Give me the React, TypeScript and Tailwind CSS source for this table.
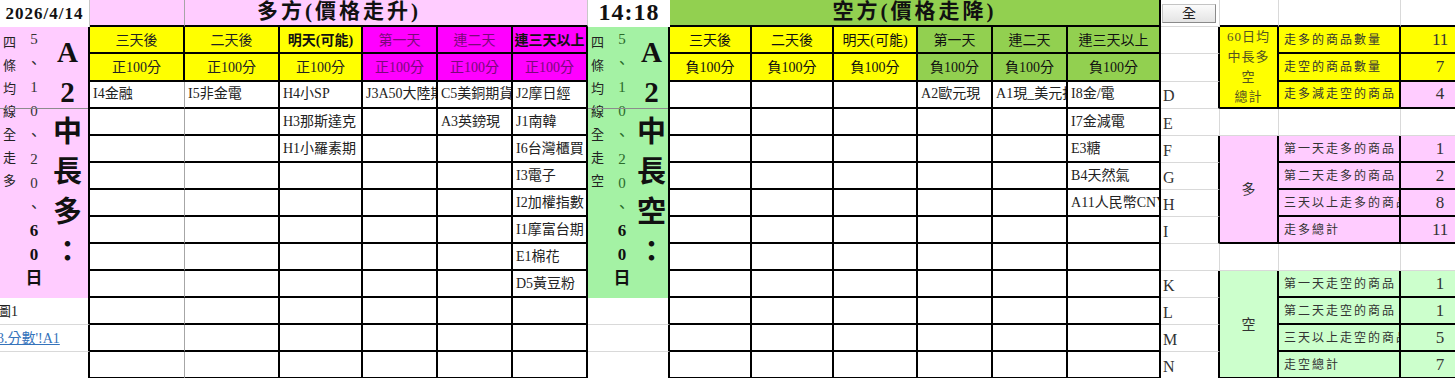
import React from "react";

const serif = "font-['Liberation_Serif','Noto_Sans_CJK_TC',serif]";

const GRID = "border-r border-b border-[#d9d9d9]";
const BLK = "border-r-2 border-b-2 border-black";
const C1DATA = "border-r border-r-[#a6a6a6] border-b-2 border-b-black";

const leftData: string[][] = [
  ["I4金融", "I5非金電", "H4小SP", "J3A50大陸期貨", "C5美銅期貨", "J2摩日經"],
  ["", "", "H3那斯達克", "", "A3英鎊現", "J1南韓"],
  ["", "", "H1小羅素期", "", "", "I6台灣櫃買"],
  ["", "", "", "", "", "I3電子"],
  ["", "", "", "", "", "I2加權指數"],
  ["", "", "", "", "", "I1摩富台期"],
  ["", "", "", "", "", "E1棉花"],
  ["", "", "", "", "", "D5黃豆粉"],
  ["", "", "", "", "", ""],
  ["", "", "", "", "", ""],
  ["", "", "", "", "", ""],
  ["", "", "", "", "", ""],
];

const rightData: string[][] = [
  ["", "", "", "A2歐元現", "A1現_美元指數", "I8金/電"],
  ["", "", "", "", "", "I7金減電"],
  ["", "", "", "", "", "E3糖"],
  ["", "", "", "", "", "B4天然氣"],
  ["", "", "", "", "", "A11人民幣CNY"],
  ["", "", "", "", "", ""],
  ["", "", "", "", "", ""],
  ["", "", "", "", "", ""],
  ["", "", "", "", "", ""],
  ["", "", "", "", "", ""],
  ["", "", "", "", "", ""],
  ["", "", "", "", "", ""],
];

const letters = ["D", "E", "F", "G", "H", "I", "", "K", "L", "M", "N", ""];

function Txt({ t }: { t: string }) {
  return (
    <div className="overflow-hidden whitespace-nowrap px-[3px] text-[14px] leading-[18px] text-[#222]">
      {t}
    </div>
  );
}

function SideBlock({ isLong }: { isLong: boolean }) {
  const col1 = isLong
    ? ["四", "條", "均", "線", "全", "走", "多"]
    : ["四", "條", "均", "線", "全", "走", "空"];
  const col2 = ["5", "、", "1", "0", "、", "2", "0", "、"];
  const col2b = ["6", "0", "日"];
  const col3 = ["A", "2", "中", "長", isLong ? "多" : "空", "："];
  return (
    <td
      rowSpan={10}
      className={
        (isLong ? "bg-[#ffccff]" : "bg-[#a4f2a4]") +
        " relative p-0 align-top border-r-2 border-black"
      }
    >
      <div className="flex">
        <div className="flex w-[21px] flex-col pl-[3px] pt-[4px]">
          {col1.map((c, i) => (
            <span key={i} className="h-[23px] text-[13px] leading-[23px] text-[#222]">
              {c}
            </span>
          ))}
        </div>
        <div className="flex w-[26px] flex-col items-center">
          {col2.map((c, i) => (
            <span
              key={i}
              className={
                (isLong ? "text-[#333]" : "text-[#2a6a2a]") +
                " h-[24px] text-[15px] leading-[24px]"
              }
            >
              {c}
            </span>
          ))}
          {col2b.map((c, i) => (
            <span key={i} className="h-[24px] text-[17px] font-bold leading-[24px] text-[#111]">
              {c}
            </span>
          ))}
        </div>
        <div className="flex flex-1 flex-col items-center pt-[5px]">
          {col3.map((c, i) => (
            <span key={i} className="h-[40px] text-[29px] font-bold leading-[40px] text-[#111]">
              {c}
            </span>
          ))}
        </div>
      </div>
      <div className="absolute left-0 right-0 top-[81px] h-px bg-[#8c8c8c]" />
    </td>
  );
}

const leftHeads = [
  { t: "三天後", bg: "bg-[#ffff00]", tc: "text-[#222]", tb: "", sc: "text-[#222]" },
  { t: "二天後", bg: "bg-[#ffff00]", tc: "text-[#222]", tb: "", sc: "text-[#222]" },
  { t: "明天(可能)", bg: "bg-[#ffff00]", tc: "text-[#111]", tb: "font-bold", sc: "text-[#222]" },
  { t: "第一天", bg: "bg-[#ff00ff]", tc: "text-[#7a087a]", tb: "", sc: "text-[#7a087a]" },
  { t: "連二天", bg: "bg-[#ff00ff]", tc: "text-[#7a087a]", tb: "", sc: "text-[#7a087a]" },
  { t: "連三天以上", bg: "bg-[#ff00ff]", tc: "text-[#111]", tb: "font-bold", sc: "text-[#7a087a]" },
];

const rightHeads = [
  { t: "三天後", bg: "bg-[#ffff00]" },
  { t: "二天後", bg: "bg-[#ffff00]" },
  { t: "明天(可能)", bg: "bg-[#ffff00]" },
  { t: "第一天", bg: "bg-[#92d050]" },
  { t: "連二天", bg: "bg-[#92d050]" },
  { t: "連三天以上", bg: "bg-[#92d050]" },
];

function Label({ t }: { t: string }) {
  return (
    <div className="overflow-hidden whitespace-nowrap pl-[5px] text-[12px] leading-[18px] tracking-[2px] text-[#333]">
      {t}
    </div>
  );
}

function Num({ t }: { t: string }) {
  return <div className="text-center text-[17px] leading-[18px] text-[#333]">{t}</div>;
}

function RightSection({ i }: { i: number }) {
  const blackRight = i === 0 || (i >= 2 && i <= 5) || (i >= 7 && i <= 10);
  const letterCell = (
    <td
      className={
        (blackRight
          ? "border-r-2 border-r-black border-b border-b-[#d9d9d9]"
          : "border-r border-b border-[#d9d9d9]") + " p-0"
      }
    >
      <div className="pl-[2px] pt-[3px] text-[16px] leading-[18px] text-[#333]">{letters[i]}</div>
    </td>
  );
  const blanks = (
    <>
      <td className={GRID + " p-0"} />
      <td className={GRID + " p-0"} />
      <td className={GRID + " p-0"} />
    </>
  );
  if (i === 0) {
    return (
      <>
        {letterCell}
        <td className={BLK + " bg-[#ffff00] p-0"}>
          <Label t="走多減走空的商品" />
        </td>
        <td className={BLK + " bg-[#ffccff] p-0"}>
          <Num t="4" />
        </td>
      </>
    );
  }
  const longRows: Record<number, [string, string]> = {
    2: ["第一天走多的商品", "1"],
    3: ["第二天走多的商品", "2"],
    4: ["三天以上走多的商品", "8"],
    5: ["走多總計", "11"],
  };
  const shortRows: Record<number, [string, string]> = {
    7: ["第一天走空的商品", "1"],
    8: ["第二天走空的商品", "1"],
    9: ["三天以上走空的商品", "5"],
    10: ["走空總計", "7"],
  };
  if (longRows[i]) {
    return (
      <>
        {letterCell}
        {i === 2 && (
          <td rowSpan={4} className={BLK + " bg-[#ffccff] p-0 text-center"}>
            <span className="text-[14px] text-[#333]">多</span>
          </td>
        )}
        <td className={BLK + " bg-[#ffccff] p-0"}>
          <Label t={longRows[i][0]} />
        </td>
        <td className={BLK + " bg-[#ffccff] p-0"}>
          <Num t={longRows[i][1]} />
        </td>
      </>
    );
  }
  if (shortRows[i]) {
    return (
      <>
        {letterCell}
        {i === 7 && (
          <td rowSpan={4} className={BLK + " bg-[#ccffcc] p-0 text-center"}>
            <span className="text-[14px] text-[#333]">空</span>
          </td>
        )}
        <td className={BLK + " bg-[#ccffcc] p-0"}>
          <Label t={shortRows[i][0]} />
        </td>
        <td className={BLK + " bg-[#ccffcc] p-0"}>
          <Num t={shortRows[i][1]} />
        </td>
      </>
    );
  }
  return (
    <>
      {letterCell}
      {blanks}
    </>
  );
}

export default function App() {
  return (
    <div className={"h-[378px] w-[1455px] overflow-hidden bg-white " + serif}>
      <table className="w-[1481px] table-fixed border-separate border-spacing-0">
        <colgroup>
          <col className="w-[90px]" />
          <col className="w-[95px]" />
          <col className="w-[95px]" />
          <col className="w-[83px]" />
          <col className="w-[75px]" />
          <col className="w-[75px]" />
          <col className="w-[75px]" />
          <col className="w-[82px]" />
          <col className="w-[82px]" />
          <col className="w-[82px]" />
          <col className="w-[84px]" />
          <col className="w-[75px]" />
          <col className="w-[75px]" />
          <col className="w-[93px]" />
          <col className="w-[59px]" />
          <col className="w-[59px]" />
          <col className="w-[122px]" />
          <col className="w-[80px]" />
        </colgroup>
        <tbody>
          {/* title row */}
          <tr className="h-[25px]">
            <td className="border-r border-r-[#c8c8c8] p-0 text-center">
              <span className="text-[17px] font-bold tracking-[1px] text-[#111]">2026/4/14</span>
            </td>
            <td className="border-r border-r-[#a6a6a6] border-b-2 border-b-black bg-[#ffccff] p-0" />
            <td
              colSpan={5}
              className="border-r border-r-[#c8c8c8] border-b-2 border-b-black bg-[#ffccff] p-0 pl-[72px] text-left"
            >
              <span className="whitespace-nowrap text-[21px] font-bold leading-[23px] tracking-[3px] text-[#111]">
                多方(價格走升)
              </span>
            </td>
            <td className="p-0 text-center">
              <span className="text-[24px] font-bold leading-[24px] tracking-[1px] text-[#111]">14:18</span>
            </td>
            <td colSpan={6} className="border-r-2 border-b-2 border-black bg-[#92d050] p-0 text-center">
              <span className="whitespace-nowrap text-[21px] font-bold leading-[23px] tracking-[3px] text-[#111]">
                空方(價格走降)
              </span>
            </td>
            <td className={GRID + " p-0"}>
              <div className="ml-[1px] flex h-[19px] w-[54px] items-center justify-center border border-[#c4c4c4] border-r-[#8a8a8a] border-b-[#8a8a8a] bg-gradient-to-b from-[#fbfbfb] to-[#e4e4e4] text-[14px] text-[#222]">
                全
              </div>
            </td>
            <td className="border-r border-r-[#d9d9d9] border-b-2 border-b-black p-0" />
            <td className="border-r border-r-[#d9d9d9] border-b-2 border-b-black p-0" />
            <td className="border-r border-r-[#d9d9d9] border-b-2 border-b-black p-0" />
          </tr>

          {/* header row 1 */}
          <tr className="h-[27px]">
            <SideBlock isLong={true} />
            {leftHeads.map((h, k) => (
              <td key={k} className={BLK + " p-0 text-center " + h.bg}>
                <span className={"whitespace-nowrap text-[14px] " + h.tc + " " + h.tb}>{h.t}</span>
              </td>
            ))}
            <SideBlock isLong={false} />
            {rightHeads.map((h, k) => (
              <td key={k} className={BLK + " p-0 text-center " + h.bg}>
                <span className="whitespace-nowrap text-[14px] text-[#111]">{h.t}</span>
              </td>
            ))}
            <td className="border-r-2 border-r-black border-b border-b-[#d9d9d9] p-0" />
            <td rowSpan={3} className={BLK + " bg-[#ffff00] p-0 text-center"}>
              <div className="text-[13px] leading-[20px] tracking-[1px] text-[#555520]">
                60日均
                <br />
                中長多
                <br />空<br />
                總計
              </div>
            </td>
            <td className={BLK + " bg-[#ffff00] p-0"}>
              <Label t="走多的商品數量" />
            </td>
            <td className={BLK + " bg-[#ffff00] p-0"}>
              <Num t="11" />
            </td>
          </tr>

          {/* header row 2 */}
          <tr className="h-[27px]">
            {leftHeads.map((h, k) => (
              <td key={k} className={BLK + " p-0 text-center " + h.bg}>
                <span className={"whitespace-nowrap text-[14px] " + h.sc}>正100分</span>
              </td>
            ))}
            {rightHeads.map((h, k) => (
              <td key={k} className={BLK + " p-0 text-center " + h.bg}>
                <span className="whitespace-nowrap text-[14px] text-[#111]">負100分</span>
              </td>
            ))}
            <td className="border-r-2 border-r-black border-b border-b-[#d9d9d9] p-0" />
            <td className={BLK + " bg-[#ffff00] p-0"}>
              <Label t="走空的商品數量" />
            </td>
            <td className={BLK + " bg-[#ffff00] p-0"}>
              <Num t="7" />
            </td>
          </tr>

          {/* data rows */}
          {leftData.map((row, i) => (
            <tr key={i} className="h-[27px]">
              {i >= 8 && (
                <td className="border-r-2 border-r-black border-b border-b-[#d9d9d9] p-0">
                  {i === 8 && (
                    <div className="-ml-[3px] whitespace-nowrap text-[14px] text-[#222]">圖1</div>
                  )}
                  {i === 9 && (
                    <div className="-ml-[3px] whitespace-nowrap text-[14px] text-[#3573bb] underline">
                      3.分數'!A1
                    </div>
                  )}
                </td>
              )}
              {row.map((t, k) => (
                <td key={k} className={(k === 0 ? C1DATA : BLK) + " p-0"}>
                  <Txt t={t} />
                </td>
              ))}
              {i >= 8 && <td className="border-r-2 border-r-black border-b border-b-[#d9d9d9] p-0" />}
              {rightData[i].map((t, k) => (
                <td key={k} className={BLK + " p-0"}>
                  <Txt t={t} />
                </td>
              ))}
              <RightSection i={i} />
            </tr>
          ))}
        </tbody>
      </table>
    </div>
  );
}
